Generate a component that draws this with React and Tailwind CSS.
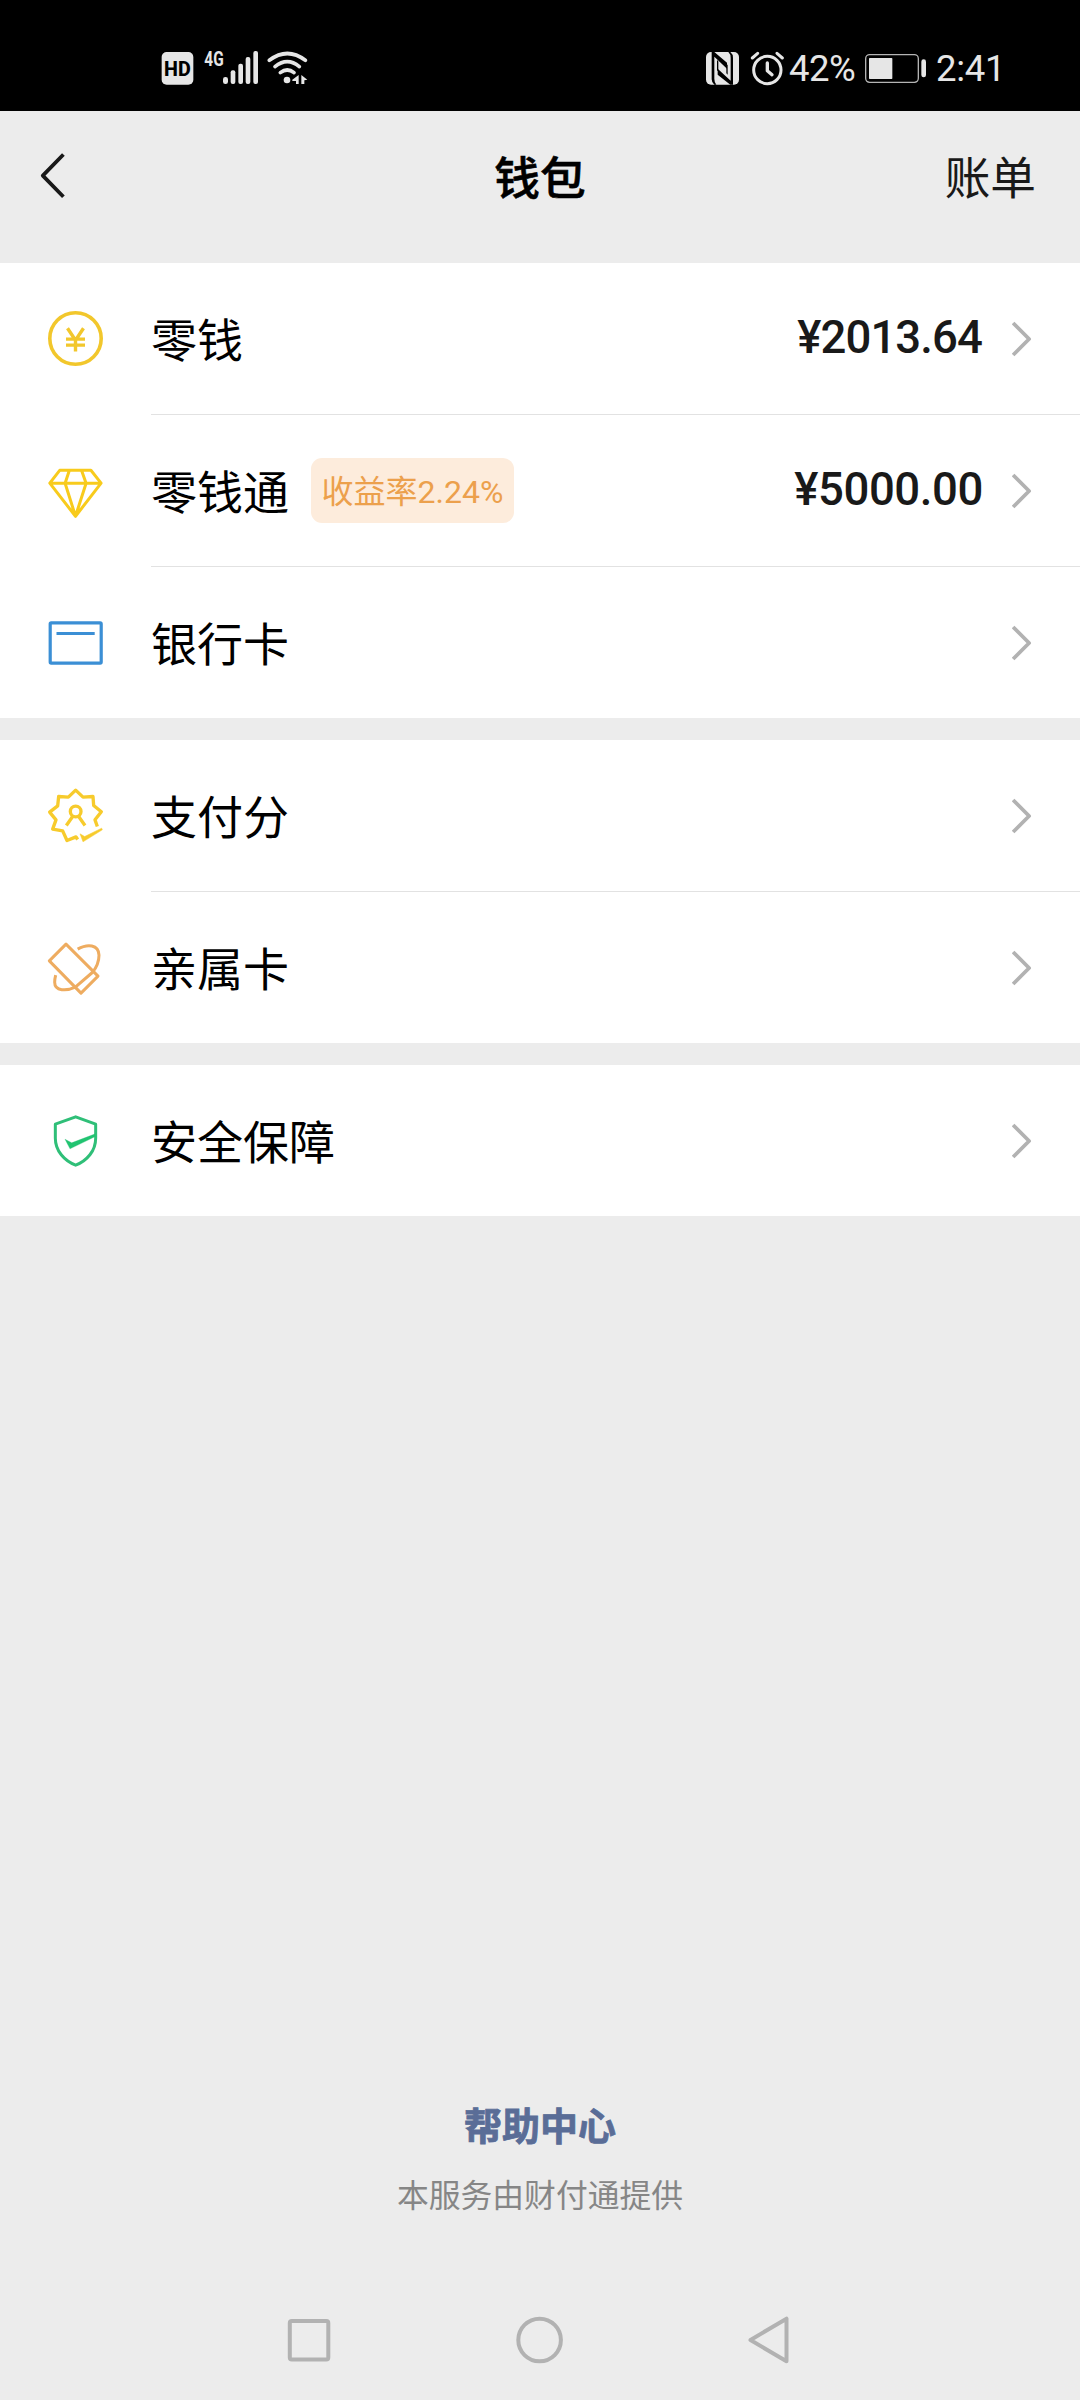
const YELLOW = '#f2c72c';

function CoinIcon() {
  return (
    <svg className="block size-[60px]" viewBox="46 308.5 60 60" fill="none" stroke={YELLOW}>
      <circle cx="75.5" cy="338" r="25.7" strokeWidth="3.6" />
      <path d="M67.5 327.7l8 12L83.5 327.7M66 338.6h19M66 344.6h19M75.5 339v12" strokeWidth="3.4" />
    </svg>
  );
}

function DiamondIcon() {
  return (
    <svg className="block size-[60px]" viewBox="46 460.5 60 60" fill="none" stroke="#f8cb1c" strokeWidth="3" strokeLinejoin="round">
      <path d="M59.7 469.8h31.2l10.2 12.8-25.6 33.2-25.7-33.2zM49.8 482.7h51.3M69.4 469.8l-4.3 12.9 10.4 33 10.6-33-4.6-12.9" />
    </svg>
  );
}

function CardIcon() {
  return (
    <svg className="block size-[60px]" viewBox="46 612.5 60 60" fill="none" stroke="#3b8fd5" strokeWidth="3.2">
      <rect x="50.2" y="622.4" width="51" height="40.2" rx="1" />
      <path d="M56.5 633h38.2" />
    </svg>
  );
}

function ScoreIcon() {
  return (
    <svg className="block size-[60px]" viewBox="138 136.5 180 180" fill="none" stroke="#f7cb2c" strokeWidth="10" strokeLinejoin="round">
      <path d="M292 258L285 238L304 214L281 195L279 168L249 170L227 149L205 170L176 168L173 196L149 215L168 238L158 266L188 271L201 300L228 289L233 297" />
      <circle cx="227" cy="213" r="16" />
      <path d="M199 255L218 228M255 255L236 228" />
      <path d="M240 280L254 288L305 263L307 268L249 304Z" fill="#f7cb2c" strokeWidth="1.5" />
    </svg>
  );
}

function FamilyIcon() {
  return (
    <svg className="block size-[60px]" viewBox="138 592.5 180 180" fill="none" stroke="#eeac60" strokeWidth="9" strokeLinejoin="round">
      <path d="M198 611L294 707L243 758L148 661Z" />
      <path d="M233 626C262 609 296 611 297 644C297 664 290 680 277 696L226 740C200 752 164 753 164 725C164 717 165 712 167 704" />
    </svg>
  );
}

function ShieldIcon() {
  return (
    <svg className="block size-[60px]" viewBox="138 241.5 180 180" fill="none" stroke="#2fbf78" strokeWidth="9" strokeLinejoin="round">
      <path d="M227 259L287 281V323C287 361 261 391 227 404C193 391 166 361 166 323V281Z" />
      <path d="M195 326L215 337L286 310V318L210 355Z" fill="#20c470" strokeWidth="1" />
    </svg>
  );
}

function Chevron() {
  return (
    <svg className="block h-9 w-5" viewBox="0 0 20 36" fill="none" stroke="#b2b2b2" strokeWidth="3.8">
      <path d="M1.1 2L17.1 18L1.1 34" strokeLinejoin="round" />
    </svg>
  );
}

function Row({ icon, label, badge, amount, tight, last }) {
  return (
    <div className="flex pl-[46px]">
      <div className="flex h-[151px] w-[105px] shrink-0 items-center">{icon}</div>
      <div className={last ? 'flex h-[151px] flex-1 items-center' : 'flex h-[152px] flex-1 items-center border-b border-[#e2e2e2]'}>
        <span className="pt-[4px] text-[46px] leading-[60px] text-black">{label}</span>
        {badge && (
          <span className="ml-[22px] flex h-[65px] w-[203px] items-center justify-center rounded-[11px] bg-[#fdecdc] pt-[2px] text-[32px] leading-[40px] text-[#eca04c]">
            {badge}
          </span>
        )}
        <span className={tight ? 'ml-auto pr-[30px] pb-[2px] text-[45.5px] leading-[60px] font-medium tracking-[-0.9px] text-[#191919]' : 'ml-auto pr-[29px] pb-[2px] text-[45.5px] leading-[60px] font-medium tracking-[-0.4px] text-[#191919]'}>
          {amount}
        </span>
        <span className="pr-[48px]">
          <Chevron />
        </span>
      </div>
    </div>
  );
}

function StatusBar() {
  return (
    <div className="flex h-[111px] items-start justify-between bg-black pt-[48px] text-[#e6e6e6]">
      <svg className="ml-[160px] block h-10 w-[150px]" viewBox="60 54 450 120" fill="#e6e6e6">
        <rect x="65" y="66" width="95" height="98" rx="15" />
        <text x="112" y="137" textAnchor="middle" fontSize="60" fontWeight="800" fill="#000" textLength="80" lengthAdjust="spacingAndGlyphs">HD</text>
        <text x="193" y="107" fontSize="60" fontWeight="700" textLength="58" lengthAdjust="spacingAndGlyphs">4G</text>
        <rect x="249" y="141" width="15" height="21" rx="7" />
        <rect x="272" y="121" width="14" height="41" rx="6" />
        <rect x="295" y="101" width="14" height="61" rx="6" />
        <rect x="317" y="81" width="14" height="81" rx="6" />
        <rect x="340" y="63" width="14" height="99" rx="6" />
        <g fill="none" stroke="#e6e6e6" strokeWidth="11" strokeLinecap="round">
          <path d="M388 91Q442 50 496 91" />
          <path d="M405 110Q442 80 478 110" />
          <path d="M421 128Q442 112 462 128" />
        </g>
        <circle cx="441" cy="150" r="10" />
        <path d="M457 149L476 135V162H468V153H457ZM484 135L502 149L493 151V162H484Z" />
      </svg>
      <div className="mr-[77px] flex h-10 items-center">
        <svg className="block h-10 w-[84px]" viewBox="42 54 252 120" fill="#e6e6e6">
          <rect x="45" y="66" width="99" height="98" rx="15" />
          <path d="M62 66H70L108 98V116L70 80V146Q70 158 76 164H70Q62 158 62 148Z" fill="#000" />
          <path d="M112 66H118Q126 72 126 84V164H118L80 134V116L119 152V84Q119 72 112 66Z" fill="#000" />
          <path d="M78 90L82 94V122H78ZM106 104H110V134L106 130Z" fill="#000" />
          <g fill="none" stroke="#e6e6e6" strokeLinecap="round">
            <circle cx="229" cy="120" r="41" strokeWidth="9" />
            <path d="M229 99V122L243 134" strokeWidth="10" strokeLinejoin="round" />
            <path d="M184 84L200 70M258 70L274 84" strokeWidth="9" />
          </g>
        </svg>
        <span className="w-[76px] pt-[2px] text-[36.5px] leading-10 tracking-[-0.5px]">42%</span>
        <svg className="block h-10 w-[62px]" viewBox="524 54 186 120">
          <rect x="526" y="74" width="158" height="83" rx="12" fill="none" stroke="#b4b4b4" strokeWidth="4" />
          <rect x="536" y="84" width="70" height="63" rx="2" fill="#e6e6e6" />
          <rect x="693" y="88" width="14" height="54" rx="7" fill="#e6e6e6" />
        </svg>
        <span className="ml-[9px] w-[67px] pt-[2px] text-[36.5px] leading-10 tracking-[-0.3px]">2:41</span>
      </div>
    </div>
  );
}

export default function App() {
  return (
    <div className="flex h-[2400px] w-[1080px] flex-col bg-[#ececec] font-[Roboto,'Noto_Sans_CJK_SC',sans-serif]">
      <StatusBar />
      <header className="grid h-[152px] grid-cols-3 items-start px-[40px] pt-[39px]">
        <svg className="mt-px block h-[50px] w-7" viewBox="0 0 28 50" fill="none" stroke="#191919" strokeWidth="3.8">
          <path d="M23.4 3.5L2.8 24.6L23.4 45.8" strokeLinejoin="round" />
        </svg>
        <h1 className="text-center text-[45.7px] leading-[60px] font-medium text-black [-webkit-text-stroke:0.6px_#000]">钱包</h1>
        <span className="mr-[4px] text-right text-[45.7px] leading-[60px] text-[#191919]">账单</span>
      </header>

      <main className="flex flex-col gap-[22px]">
        <section className="bg-white">
          <Row icon={<CoinIcon />} label="零钱" amount="¥2013.64" tight />
          <Row icon={<DiamondIcon />} label="零钱通" badge="收益率2.24%" amount="¥5000.00" />
          <Row icon={<CardIcon />} label="银行卡" last />
        </section>
        <section className="bg-white">
          <Row icon={<ScoreIcon />} label="支付分" />
          <Row icon={<FamilyIcon />} label="亲属卡" last />
        </section>
        <section className="bg-white">
          <Row icon={<ShieldIcon />} label="安全保障" last />
        </section>
      </main>

      <footer className="mt-auto flex flex-col items-center">
        <a className="text-[38px] leading-[50px] font-bold text-[#5a6d97] [-webkit-text-stroke:0.8px_#5a6d97]">帮助中心</a>
        <p className="mt-[22px] text-[31.8px] leading-[44px] text-[#868686]">本服务由财付通提供</p>
        <nav className="mt-[72px] mb-[10px] flex h-[100px] w-full items-center justify-between pr-[289px] pl-[286px]">
          <svg className="block size-[46px]" viewBox="0 0 46 46" fill="none" stroke="#b2b2b2" strokeWidth="4">
            <rect x="3.8" y="4" width="38.5" height="38.5" rx="2" />
          </svg>
          <svg className="block size-12" viewBox="0 0 48 48" fill="none" stroke="#b2b2b2" strokeWidth="4">
            <circle cx="24.6" cy="24" r="21.3" />
          </svg>
          <svg className="block h-12 w-[46px]" viewBox="0 0 46 48" fill="none" stroke="#b2b2b2" strokeWidth="4" strokeLinejoin="round">
            <path d="M41.5 2.7V45.3L5.5 24Z" />
          </svg>
        </nav>
      </footer>
    </div>
  );
}
